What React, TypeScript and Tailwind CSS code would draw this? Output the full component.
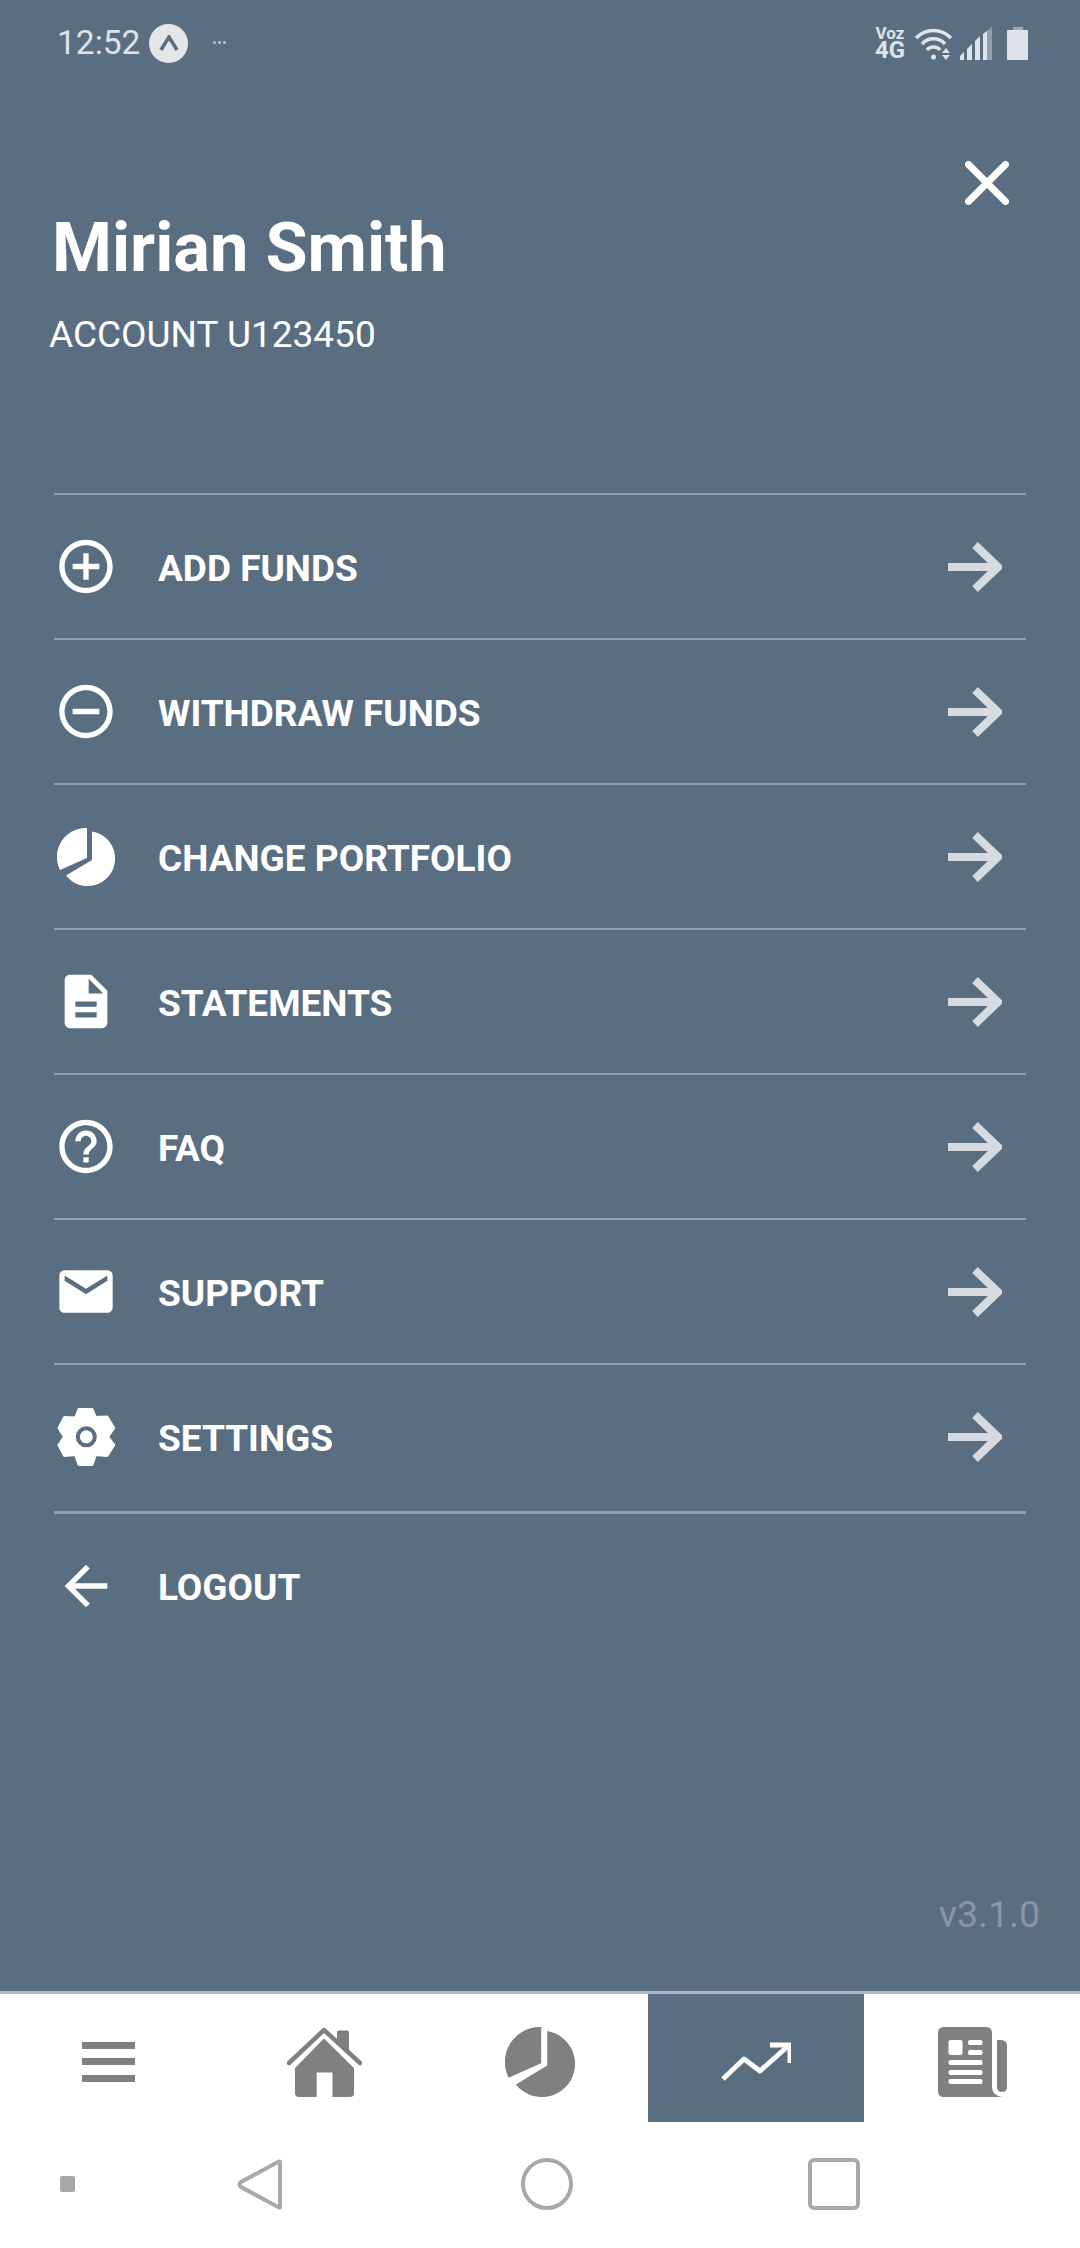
import { MdAddCircleOutline, MdArrowBack, MdDescription, MdEmail, MdHelpOutline, MdRemoveCircleOutline } from "react-icons/md";

function Pie({ className }: { className: string }) {
  return (
    <svg viewBox="0 0 58 58" className={className} fill="currentColor">
      <path d="M30 0 V30 L3 42 A29 29 0 0 1 30 0 Z" />
      <path d="M35 3.4 V32 L9 47.6 A27.5 27.5 0 1 0 35 3.4 Z" />
    </svg>
  );
}

function Gear() {
  return (
    <svg viewBox="0 0 59 60" className="w-[59px] h-[60px]" fill="#ffffff" stroke="#ffffff" strokeWidth="3" strokeLinejoin="round">
      <path d="M22 2.5 H35 L38.5 10.5 L50 10 L56.7 21 L50.5 29.8 L56.7 38 L50 48.5 L38.5 47.5 L35 57.5 H22 L18.5 47.5 L7.5 48.5 L2 38 L7.5 29.8 L2 21 L7.5 10.5 L18.5 11 Z" />
      <circle cx="29.3" cy="29.8" r="8.5" fill="#ffffff" stroke="#5a6e82" strokeWidth="4" />
    </svg>
  );
}

function ArrowRight() {
  return (
    <svg viewBox="0 0 54 50" className="w-[54px] h-[50px]" fill="none" stroke="#d5dbe0" strokeWidth="8">
      <path d="M0 25 H48" />
      <path d="M27 3 L50 25 L27 47" />
    </svg>
  );
}

const rows = [
  { label: "ADD FUNDS", icon: <MdAddCircleOutline size={67} /> },
  { label: "WITHDRAW FUNDS", icon: <MdRemoveCircleOutline size={67} /> },
  { label: "CHANGE PORTFOLIO", icon: <Pie className="w-[58px] h-[58px]" /> },
  { label: "STATEMENTS", icon: <MdDescription size={67} /> },
  { label: "FAQ", icon: <MdHelpOutline size={67} /> },
  { label: "SUPPORT", icon: <MdEmail size={67} /> },
  { label: "SETTINGS", icon: <Gear /> },
];

function StatusBar() {
  return (
    <div className="h-[86px] flex items-center pl-[57px] pr-[52px] text-[#dde3e8]">
      <span className="text-[33.5px] font-normal leading-none">12:52</span>
      <span className="ml-[9px] w-[39px] h-[39px] rounded-full bg-[#e3e7ea] flex items-center justify-center">
        <svg viewBox="0 0 20 16" className="w-[20px] h-[16px]" fill="none" stroke="#5a6e82" strokeWidth="3.5">
          <path d="M2 15 L10 2 L18 15" />
        </svg>
      </span>
      <span className="ml-[25px] flex gap-[2px] -mt-[2px]">
        <i className="w-[3px] h-[3px] rounded-full bg-[#b9c4ce]" />
        <i className="w-[3px] h-[3px] rounded-full bg-[#b9c4ce]" />
        <i className="w-[3px] h-[3px] rounded-full bg-[#b9c4ce]" />
      </span>
      <div className="ml-auto flex items-center">
        <div className="w-[32px] flex flex-col items-center font-bold">
          <div className="text-[17px] leading-[15px]">Voz</div>
          <div className="text-[24px] leading-[19px]">4G</div>
        </div>
        <svg viewBox="0 0 39 33" className="ml-[8px] w-[39px] h-[33px]" fill="none" stroke="#dde3e8" strokeWidth="3.5">
          <path d="M2 11 C12 1 27 1 37 11" />
          <path d="M8 17 C14 10 25 10 31 17" />
          <path d="M13 23 C16 19 23 19 26 23" />
          <circle cx="19.5" cy="30" r="2.5" fill="#dde3e8" stroke="none" />
          <path d="M28 26 L32 21 L36 26 Z M28 28 L36 28 L32 33 Z" fill="#dde3e8" stroke="none" />
        </svg>
        <svg viewBox="0 0 32 33" className="ml-[7px] w-[32px] h-[33px]" fill="#dde3e8">
          <path d="M0 33 V29 L4 25 V33 Z" />
          <path d="M7 33 V22 L12 17 V33 Z" />
          <path d="M15 33 V14 L20 9 V33 Z" />
          <path d="M23 33 V7 L32 0 V33 Z" fill="#8f9fae" />
          <path d="M23 33 V7 L27 4 V33 Z" />
        </svg>
        <div className="ml-[15px] w-[21px] h-[33px] flex flex-col items-center">
          <div className="w-[10px] h-[3px] bg-[#9aa8b5]" />
          <div className="w-[21px] flex-1 bg-[#dde3e8] rounded-[1px]" />
        </div>
      </div>
    </div>
  );
}

function BottomNav() {
  return (
    <div className="grid grid-cols-5 h-[128px] bg-white text-[#808080]">
      <div className="flex items-center justify-center pt-[8px]">
        <svg viewBox="0 0 53 40" className="w-[53px] h-[40px]" fill="currentColor">
          <rect y="0" width="53" height="7" />
          <rect y="16" width="53" height="7" />
          <rect y="33" width="53" height="7" />
        </svg>
      </div>
      <div className="flex items-center justify-center pt-[8px]">
        <svg viewBox="0 0 75 70" className="w-[75px] h-[70px]" fill="currentColor">
          <path d="M37 11.5 L67 41 V66 Q67 70 63 70 H45.5 V45.5 H29.7 V70 H12 Q8 70 8 66 V41 Z" />
          <path d="M50 5 Q50 3.5 52 3.5 H60 Q62 3.5 62 5 V25 L50 14 Z" />
          <path d="M2 36 L37 3 L73 36" fill="none" stroke="currentColor" strokeWidth="4.5" strokeLinecap="round" strokeLinejoin="round" />
        </svg>
      </div>
      <div className="flex items-center justify-center pt-[8px]">
        <Pie className="w-[70px] h-[70px]" />
      </div>
      <div className="flex items-center justify-center pt-[8px] bg-[#5a6e82]">
        <svg viewBox="0 0 70 40" className="w-[70px] h-[40px]" fill="none" stroke="#ffffff" strokeWidth="5">
          <path d="M2 37 L23 17 L39 29 L66 5" strokeLinejoin="round" />
          <path d="M49 3 H69 V21" />
        </svg>
      </div>
      <div className="flex items-center justify-center pt-[8px]">
        <svg viewBox="0 0 69 70" className="w-[69px] h-[70px]">
          <path d="M6 0 H48 Q54 0 54 6 V60 Q54 68 64 70 H6 Q0 70 0 64 V6 Q0 0 6 0 Z" fill="currentColor" />
          <path d="M59 13 H63 Q69 13 69 19 V60 Q69 65 64 65 Q59 65 59 60 Z" fill="currentColor" />
          <g fill="#ffffff">
            <rect x="10.5" y="13" width="14" height="15" rx="2" />
            <rect x="30" y="13" width="14.5" height="5" rx="2" />
            <rect x="30" y="23" width="14.5" height="5" rx="2" />
            <rect x="10.5" y="33" width="34" height="5" rx="2" />
            <rect x="10.5" y="43" width="34" height="5" rx="2" />
            <rect x="10.5" y="52" width="34" height="5" rx="2" />
          </g>
        </svg>
      </div>
    </div>
  );
}

function AndroidNav() {
  return (
    <div className="h-[126px] flex items-center pl-[60px] pb-[2px] text-[#a8a8a8]">
      <div className="w-[15px] h-[16px] rounded-[2px] bg-[#a8a8a8]" />
      <svg viewBox="0 0 46 51" className="ml-[162px] w-[46px] h-[51px]" fill="none" stroke="currentColor" strokeWidth="4" strokeLinejoin="round">
        <path d="M43 3 Q43 2 41 3 L4 23 Q1 25.5 4 28 L41 48 Q43 49 43 48 Z" />
      </svg>
      <div className="ml-[238px] w-[52px] h-[52px] rounded-full border-4 border-[#a8a8a8]" />
      <div className="ml-[235px] w-[52px] h-[52px] rounded-[6px] border-4 border-[#a8a8a8]" />
    </div>
  );
}

export default function App() {
  return (
    <div className="w-[1080px] h-[2248px] flex flex-col font-['Roboto',sans-serif] bg-white overflow-hidden">
      <div className="h-[1994px] bg-[#5a6e82] border-b-[3px] border-[#b0b8be] flex flex-col text-white">
        <StatusBar />
        <div className="h-[119px] flex justify-end items-end pr-[71px]">
          <svg viewBox="0 0 44 44" className="w-[44px] h-[44px]" fill="none" stroke="#ffffff" strokeWidth="7" strokeLinecap="round">
            <path d="M3.5 3.5 L40.5 40.5 M40.5 3.5 L3.5 40.5" />
          </svg>
        </div>
        <h1 className="mt-[3px] pl-[52px] text-[68.5px] leading-[80px] font-bold">Mirian Smith</h1>
        <div className="mt-[25px] pl-[49px] text-[37px] leading-[44px]">ACCOUNT U123450</div>

        <div className="mt-[136px] mx-[54px]">
          {rows.map((row) => (
            <div key={row.label} className="h-[145px] border-t-2 border-[#8ea1b3] flex items-center pr-[24px]">
              <div className="w-[64px] h-[72px] flex items-center justify-center">{row.icon}</div>
              <span className="ml-[40px] pt-[4px] text-[37px] font-bold leading-none">{row.label}</span>
              <span className="ml-auto"><ArrowRight /></span>
            </div>
          ))}
          <div className="mt-[3px] h-[146px] border-t-[3px] border-[#8ea1b3] flex items-center">
            <div className="w-[64px] h-[72px] flex items-center justify-center"><MdArrowBack size={66} /></div>
            <span className="ml-[40px] pt-[4px] text-[37px] font-bold leading-none">LOGOUT</span>
          </div>
        </div>

        <div className="mt-auto mb-[57px] pr-[40px] text-right text-[37.5px] leading-[40px] text-[#8797a6]">v3.1.0</div>
      </div>
      <BottomNav />
      <AndroidNav />
    </div>
  );
}
